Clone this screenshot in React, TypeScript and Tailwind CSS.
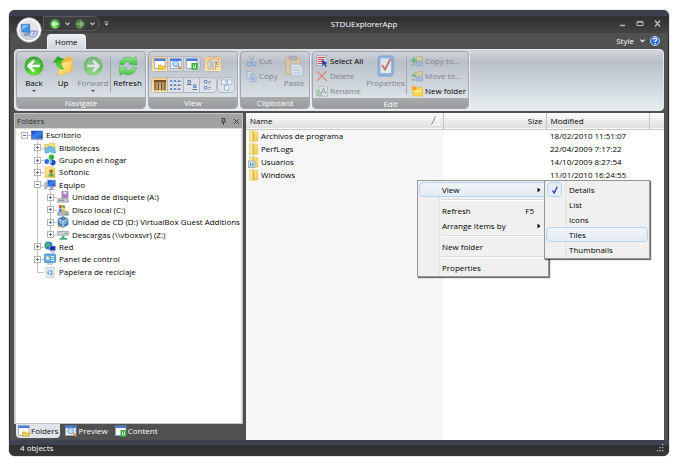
import { useState } from 'react';
import type { ReactNode } from 'react';

interface TreeNode {
  label: string;
  depth: number;
  state: 'open' | 'closed' | 'leaf';
  icon: ReactNode;
  last?: boolean;
}

interface FileRow {
  name: string;
  modified: string;
  shared?: boolean;
}

/* ---------- ribbon icons ---------- */

function Gradients() {
  return (
    <svg className="absolute size-0" aria-hidden="true">
      <defs>
        <radialGradient id="green" cx="0.5" cy="0.85" r="0.9">
          <stop offset="0" stopColor="#6fe63a" />
          <stop offset="0.6" stopColor="#37b424" />
          <stop offset="1" stopColor="#23921e" />
        </radialGradient>
        <linearGradient id="folder" x1="0" y1="0" x2="1" y2="1">
          <stop offset="0" stopColor="#fff3a0" />
          <stop offset="1" stopColor="#f2c443" />
        </linearGradient>
        <linearGradient id="leaf" x1="0" y1="0" x2="0" y2="1">
          <stop offset="0" stopColor="#9be890" />
          <stop offset="1" stopColor="#3cc042" />
        </linearGradient>
        <linearGradient id="screen" x1="0" y1="0" x2="1" y2="1">
          <stop offset="0" stopColor="#1238b8" />
          <stop offset="0.5" stopColor="#3c86ea" />
          <stop offset="1" stopColor="#1b49b4" />
        </linearGradient>
      </defs>
    </svg>
  );
}

function ArrowBall({ size, flip = false, faded = false }: { size: number; flip?: boolean; faded?: boolean }) {
  return (
    <svg width={size} height={size} viewBox="0 0 20 20" opacity={faded ? 0.55 : 1}>
      <circle cx="10" cy="10" r="9.5" fill="url(#green)" stroke="#8fca88" strokeWidth="0.6" />
      <path d="M2.2 8.5a8 8 0 0 1 15.6 0c-4 2-11 2-15.6 0z" fill="#fff" opacity="0.2" />
      <path
        d="M10 4.6 4.6 10l5.4 5.4M5 10h10.8"
        fill="none"
        stroke="#fff"
        strokeWidth="2.6"
        transform={flip ? 'matrix(-1 0 0 1 20 0)' : undefined}
      />
    </svg>
  );
}

function UpIcon() {
  return (
    <svg width="20" height="20" viewBox="0 0 20 20">
      <path d="M5 4l7-2 1.500-1.500 6 .8v13L7 17z" fill="#e8bf4a" />
      <path d="M6.500 7.500 19.600 4 17.500 16 5 19.500z" fill="url(#folder)" stroke="#e6b23a" strokeWidth="0.6" />
      <path d="M.6 6.500 4.500.6l6.500 3-2.600 1c-.8 3.600-.2 6.200 2.200 8.600C6 13 3.300 10.600 3.400 6.200z" fill="url(#green)" stroke="#2aa526" strokeWidth="0.5" />
    </svg>
  );
}

function RefreshIcon() {
  return (
    <svg width="20" height="20" viewBox="0 0 20 20">
      <path d="M1.500 8.500C2.500 2 9.500-.8 14.700 2.600L18 .6l1 8.400-8.200-1 2-2.200C9.600 4.600 6.800 5.600 5.300 9z" fill="url(#leaf)" stroke="#3cae40" strokeWidth="0.5" />
      <path d="M18.500 11.500C17.500 18 10.500 20.800 5.300 17.400L2 19.400 1 11l8.200 1-2 2.200c3.200 1.200 6 .2 7.500-3.200z" fill="url(#leaf)" stroke="#3cae40" strokeWidth="0.5" />
    </svg>
  );
}

function LogoIcon() {
  return (
    <svg width="26" height="26" viewBox="0 0 26 26">
      <circle cx="13" cy="13" r="12.3" fill="#e4e4e6" stroke="#9b9b9f" />
      <path d="M2 13a11 11 0 0 0 22 0z" fill="#cfd0d4" />
      <circle cx="13" cy="13" r="11" fill="none" stroke="#fff" strokeWidth="1.4" />
      <path d="M5 7.500 13.500 7l.8 8.500L6 15z" fill="#3d92dd" stroke="#2c6fb0" strokeWidth="0.5" />
      <path d="M6.200 8.500l6.300-.4-5.800 5z" fill="#8ccaf5" />
      <path d="M7 17l6-1.500 2 1.500-6 2.200z" fill="#7f97ad" />
      <path d="M12.500 18.500 16 14l5.500 1-3 5z" fill="#e9edff" stroke="#6373c8" strokeWidth="0.7" />
      <path d="M15.500 17.500 19.500 14l-1.500 4z" fill="#8794e0" />
    </svg>
  );
}

function PaneIcon({ kind }: { kind: 'folder' | 'search' | 'content' }) {
  return (
    <svg width="12" height="12" viewBox="0 0 12 12">
      <rect x="0.5" y="1" width="10.5" height="9.5" fill="#fff" stroke="#8d9cbb" strokeWidth="0.7" />
      <rect x="0.3" y="0.6" width="11" height="2.4" fill="#4a7bdc" />
      {kind === 'folder' && <path d="M4.500 11.300V7h2.500l1 1h3.800l-1.500 3.300z" fill="#f6cf52" stroke="#c99b2c" strokeWidth="0.6" />}
      {kind === 'search' && (
        <>
          <path d="M7.800 7.800l3.400 3.400" stroke="#e5893c" strokeWidth="1.9" />
          <circle cx="5.600" cy="5.800" r="3" fill="#b5e0fa" stroke="#6f9bd0" />
        </>
      )}
      {kind === 'content' && (
        <>
          <rect x="5.500" y="5" width="6" height="6.800" fill="#3aa840" />
          <path d="M7.500 6.500V10h2V6.500" stroke="#d9ffd5" strokeWidth="0.9" fill="none" />
        </>
      )}
    </svg>
  );
}

function NotesIcon() {
  return (
    <svg width="12" height="12" viewBox="0 0 12 12">
      <path d="M3.500 1H11v7.500H3.500z" fill="#fff6e0" stroke="#a39479" strokeWidth="0.7" />
      <path d="M1 3h7.500v8H1z" fill="#f4efe4" stroke="#a39479" strokeWidth="0.7" />
      <path d="M2.300 5h5M2.300 7h5M2.300 9h5M9.500 3v4" stroke="#8d867c" strokeWidth="0.9" />
    </svg>
  );
}

function DetailsIcon() {
  return (
    <svg width="12" height="12" viewBox="0 0 12 12">
      <path d="M0 1h12v2H0z" fill="#7a4d1f" />
      <path d="M1 2.500v9M4.300 2.500v9M7.700 2.500v9M11 2.500v9" stroke="#6a4e2d" strokeWidth="1.4" />
      <path d="M2.600 3v8M6 3v8M9.400 3v8" stroke="#b98c5a" strokeWidth="1.2" />
    </svg>
  );
}

function ListIcon() {
  return (
    <svg width="12" height="12" viewBox="0 0 12 12">
      {[1, 5, 9].map((y) => (
        <g key={y}>
          <path d={`M0 ${y}h2v2h-2zM4 ${y}h2v2h-2zM8 ${y}h2v2h-2z`} fill="#6b8ecd" />
          <path d={`M2.400 ${y + 1.5}h1.200M6.400 ${y + 1.5}h1.200M10.400 ${y + 1.5}h1.200`} stroke="#7a8296" strokeWidth="0.8" />
        </g>
      ))}
    </svg>
  );
}

function IconsIcon() {
  return (
    <svg width="12" height="12" viewBox="0 0 12 12">
      <path d="M2 1.500h2.500V4H2zM7.500 6h2.500v2.500H7.500z" fill="#cfe0fb" stroke="#4974c2" strokeWidth="0.9" />
      <path d="M1 5.500h4.500M6.500 10.500h4.500" stroke="#666d80" />
    </svg>
  );
}

function TilesIcon() {
  return (
    <svg width="12" height="12" viewBox="0 0 12 12">
      <path d="M2.500 1.500H5V4H2.500zM2.500 7.500H5V10H2.500z" fill="#dbe7fb" stroke="#6284c4" strokeWidth="0.9" />
      <path d="M6.500 2.500H9M6.500 4.200H8.500M6.500 8.500H9M6.500 10.200H8.500" stroke="#7d8292" strokeWidth="0.8" />
    </svg>
  );
}

function ThumbsIcon() {
  return (
    <svg width="13" height="12" viewBox="0 0 13 12" fill="#f3f8ff" stroke="#8aa9e0" strokeWidth="0.8">
      <path d="M1.500.8h3L6 2.300v3H1.500zM7.500.8h3L12 2.300v3H7.500zM4.500 6.500h3L9 8v3.200H4.500z" />
    </svg>
  );
}

function CutIcon() {
  return (
    <svg width="11" height="12" viewBox="0 0 11 12" fill="none" opacity="0.55">
      <path d="M3 1l4 7M8 1L4 8" stroke="#8a9db5" strokeWidth="1.2" />
      <circle cx="2.800" cy="9" r="1.900" stroke="#5a94d0" strokeWidth="1.3" />
      <circle cx="8.200" cy="9" r="1.900" stroke="#5a94d0" strokeWidth="1.3" />
    </svg>
  );
}

function CopyIcon() {
  return (
    <svg width="11" height="12" viewBox="0 0 11 12" strokeWidth="0.7" stroke="#7f97c4" opacity="0.7">
      <path d="M.8 1.500h4l1.500 1.500v5.500H.8z" fill="#cfdcf2" />
      <path d="M4.200 4.500h4l2 2v5h-6z" fill="#b5c9ec" />
      <path d="M5.500 7.500h3M5.500 9.300h3" stroke="#6480b8" />
    </svg>
  );
}

function PasteIcon() {
  return (
    <svg width="20" height="22" viewBox="0 0 20 22" opacity="0.6">
      <rect x="1.500" y="2.500" width="15" height="17" rx="1" fill="#e8c78a" stroke="#c9a670" />
      <path d="M5.500 1.200h7v3.600h-7z" fill="#a4a8ae" stroke="#80858c" strokeWidth="0.8" />
      <path d="M7 9h8l4 4v8H7z" fill="#eef3fb" stroke="#93a5c5" strokeWidth="0.8" />
      <path d="M9 13h7M9 15.500h8M9 18h8" stroke="#b4c2dc" />
    </svg>
  );
}

function SelectAllIcon() {
  return (
    <svg width="12" height="12" viewBox="0 0 12 12">
      <rect x="0.500" y="0.500" width="9.500" height="10" fill="#dfe5f3" stroke="#8d9abb" strokeWidth="0.6" />
      <path d="M1.500 2.500H9M1.500 4.500H8M1.500 6.500H6.500M1.500 8.500H6.500" stroke="#d9483a" strokeWidth="1.1" />
      <path d="M6 4.500l5.500 3.700-2.300.5 1.600 2.500-1.200.7-1.500-2.600L6.300 11z" fill="#1f3f9c" />
    </svg>
  );
}

function DeleteIcon() {
  return (
    <svg width="12" height="12" viewBox="0 0 12 12">
      <path d="M1 1.500l10 9.500M10.500 1L1 11" stroke="#d98b81" strokeWidth="1.3" />
    </svg>
  );
}

function RenameIcon() {
  return (
    <svg width="12" height="12" viewBox="0 0 12 12" opacity="0.6">
      <path d="M3 1.500h8.500v9.500H3z" fill="#e4ebe6" stroke="#8f9d96" strokeWidth="0.7" />
      <path d="M5 9l2.500-6L10 9M5.800 7h3.400" fill="none" stroke="#6c7b80" />
      <path d="M.7 11V5.500h2.600L6 11z" fill="#8ac492" stroke="#639c6d" strokeWidth="0.6" />
    </svg>
  );
}

function PropertiesIcon() {
  return (
    <svg width="18" height="22" viewBox="0 0 18 22" opacity="0.8">
      <path d="M2.500 1h12l2 1.500-.6 17.500-1.500 1H2.200L1 19.500 1.500 2z" fill="#86b1de" stroke="#6b98cb" />
      <rect x="3.500" y="3.500" width="10.500" height="14.500" fill="#e9edf4" />
      <path d="M5 10l3 4.500L13.500 4" fill="none" stroke="#cc5a4f" strokeWidth="1.9" />
    </svg>
  );
}

function TransferIcon({ move = false }: { move?: boolean }) {
  return (
    <svg width="12" height="12" viewBox="0 0 12 12" opacity="0.7">
      <path d="M3.500 2.500h3l1-1h4V6h-8z" fill="#d9cf8c" stroke="#a79c5a" strokeWidth="0.6" />
      <path d="M5 7h6.500v4H5z" fill="#9bb2de" stroke="#7c93c4" strokeWidth="0.6" />
      <path d={move ? 'M.5 4.500h4.500v2H.5z' : 'M2 2.500h2v2h2v2H4v2H2v-2H0v-2h2z'} fill="#57a968" />
      <path d="M.5 9h3.500v1.500H.5z" fill="#72b47f" />
    </svg>
  );
}

function NewFolderIcon() {
  return (
    <svg width="12" height="12" viewBox="0 0 12 12">
      <path d="M2 4h3.500l1-1.300H11.500V11H2z" fill="#fbd94e" stroke="#ecb93a" strokeWidth="0.7" />
      <path d="M3 5.500h7.800V7H3z" fill="#fff0a0" />
      <path d="M3 0l.8 2L6 1.500 4.700 3.200 6 5l-2.200-.6L3 6.500l-.8-2.100L0 5l1.300-1.800L0 1.500l2.200.5z" fill="#ff9c1c" />
    </svg>
  );
}

/* ---------- tree icons ---------- */

const treeSvg = { width: 12, height: 12, viewBox: '0 0 12 12' };

const desktopIcon = (
  <svg {...treeSvg}>
    <rect x="0.500" y="2" width="11" height="7.500" fill="url(#screen)" stroke="#3a5596" strokeWidth="0.6" />
    <path d="M0 10.600h12" stroke="#8fa0c4" />
  </svg>
);

const libraryIcon = (
  <svg {...treeSvg}>
    <path d="M.5 2.500h4l1-1h5.500V9H.5z" fill="#f3dc7e" stroke="#d1b050" strokeWidth="0.6" />
    <path d="M1.500 6q4.500-3 9 0l1 5H8.500q-2.500-2.500-5 0H1z" fill="#6cc0ea" stroke="#4c9bcb" strokeWidth="0.6" />
  </svg>
);

const homeGroupIcon = (
  <svg {...treeSvg}>
    <circle cx="7.500" cy="3.300" r="2.700" fill="#35b13f" />
    <circle cx="3" cy="7.500" r="2.500" fill="#2b62d8" />
    <circle cx="8.800" cy="8.600" r="2.800" fill="#1c4fc0" />
    <path d="M5 5l3 3M3.500 8l4 1" stroke="#9ed9ff" strokeWidth="1.2" />
  </svg>
);

const userIcon = (
  <svg {...treeSvg}>
    <path d="M1 .8h6L11 2v9.500H1z" fill="url(#folder)" stroke="#dcb95a" strokeWidth="0.6" />
    <circle cx="7.200" cy="5.200" r="1.800" fill="#9a643a" />
    <path d="M4.500 10.500q.4-3.500 2.700-3.500t2.800 3.500z" fill="#5fa67a" />
  </svg>
);

const computerIcon = (
  <svg {...treeSvg}>
    <path d="M.8 3.500H3V10H.8z" fill="#b4bac6" stroke="#8d94a0" strokeWidth="0.5" />
    <rect x="3.300" y="1" width="8.300" height="6.800" fill="url(#screen)" stroke="#a6b0c6" strokeWidth="0.7" />
    <path d="M6 8h3v1.700H6zM4.500 10h6v1h-6z" fill="#8f99aa" />
  </svg>
);

const floppyIcon = (
  <svg {...treeSvg}>
    <rect x="5" y="0.500" width="6" height="6" fill="#b37fd0" stroke="#8b5ba6" strokeWidth="0.6" />
    <path d="M6.300.8h3.400v2H6.300z" fill="#f2e8f7" />
    <path d="M1 7.500h10l.6 3.700H.4z" fill="#c3c6cc" stroke="#8f949d" strokeWidth="0.6" />
    <path d="M2 9.300h5" stroke="#7f848c" />
  </svg>
);

const diskIcon = (
  <svg {...treeSvg}>
    <path d="M1 7.500h10l.6 3.700H.4z" fill="#b3b7bd" stroke="#7c828b" strokeWidth="0.6" />
    <path d="M2 1.200l2.700-.5v3L2 4.200z" fill="#e2542f" />
    <path d="M5.200.8l2.800.7v3l-2.800-.7z" fill="#6fb63c" />
    <path d="M2 4.700l2.700-.5v3L2 7.500z" fill="#3d7fdc" />
    <path d="M5.200 4.300L8 5v2.700l-2.800-.5z" fill="#f0bd2e" />
    <path d="M8 10h2.500" stroke="#54a53f" />
  </svg>
);

const cdIcon = (
  <svg {...treeSvg}>
    <path d="M6 .6l5 2.400v5.700L6 11.400 1 8.700V3z" fill="#4585b8" stroke="#33688f" strokeWidth="0.6" />
    <path d="M1.500 3.200L6 5.500l4.500-2.300M6 5.500V11" fill="none" stroke="#e4f2fc" />
    <path d="M2.500 5l2 3M9.500 5l-2 3" stroke="#e4f2fc" strokeWidth="0.8" />
    <path d="M1 9l3 2.500H1z" fill="#e9a32b" />
  </svg>
);

const netDriveIcon = (
  <svg {...treeSvg}>
    <path d="M.6 2.500h10.800v3.600H.6z" fill="#cdd0d4" stroke="#8a9099" strokeWidth="0.7" />
    <path d="M8 4.400h2" stroke="#41b550" />
    <path d="M5 6.500h2.500V9H10v1.800H2.500V9H5z" fill="#45b070" />
  </svg>
);

const networkIcon = (
  <svg {...treeSvg}>
    <circle cx="4.500" cy="4.500" r="4" fill="#2577d2" />
    <path d="M2 2.500q2-2 3.500-.5T4 5.500 1.500 6zM5.500 6l2-1.500v3z" fill="#45bb52" />
    <rect x="5.500" y="5" width="6" height="4.700" fill="#1430a8" stroke="#a9b7d8" strokeWidth="0.7" />
    <path d="M7 11h3.500" stroke="#8590a2" />
  </svg>
);

const controlPanelIcon = (
  <svg {...treeSvg}>
    <rect x="0.500" y="1" width="11" height="8.500" rx="0.8" fill="#5aabe6" stroke="#4285ba" strokeWidth="0.7" />
    <circle cx="3.800" cy="5" r="2" fill="#d9f0ff" />
    <path d="M3.800 5V3a2 2 0 0 1 2 2z" fill="#f2a638" />
    <path d="M7 3.500h3M7 5.500h3M7 7.500h3" stroke="#e8f6ff" strokeWidth="0.9" />
    <path d="M3 11h6" stroke="#98a3ae" />
  </svg>
);

const binIcon = (
  <svg {...treeSvg}>
    <path d="M1.500 1.500h9l-1 10h-7z" fill="#e4edf4" stroke="#b4c4d0" strokeWidth="0.7" />
    <circle cx="6" cy="6.600" r="2" fill="none" stroke="#5590d6" strokeWidth="1.2" strokeDasharray="3 1" />
  </svg>
);

const tree: TreeNode[] = [
  { label: 'Escritorio', depth: 0, state: 'open', icon: desktopIcon },
  { label: 'Bibliotecas', depth: 1, state: 'closed', icon: libraryIcon },
  { label: 'Grupo en el hogar', depth: 1, state: 'closed', icon: homeGroupIcon },
  { label: 'Softonic', depth: 1, state: 'closed', icon: userIcon },
  { label: 'Equipo', depth: 1, state: 'open', icon: computerIcon },
  { label: 'Unidad de disquete (A:)', depth: 2, state: 'closed', icon: floppyIcon },
  { label: 'Disco local (C:)', depth: 2, state: 'closed', icon: diskIcon },
  { label: 'Unidad de CD (D:) VirtualBox Guest Additions', depth: 2, state: 'closed', icon: cdIcon },
  { label: 'Descargas (\\\\vboxsvr) (Z:)', depth: 2, state: 'closed', icon: netDriveIcon, last: true },
  { label: 'Red', depth: 1, state: 'closed', icon: networkIcon },
  { label: 'Panel de control', depth: 1, state: 'closed', icon: controlPanelIcon },
  { label: 'Papelera de reciclaje', depth: 1, state: 'leaf', icon: binIcon, last: true },
];

const files: FileRow[] = [
  { name: 'Archivos de programa', modified: '18/02/2010 11:51:07' },
  { name: 'PerfLogs', modified: '22/04/2009 7:17:22' },
  { name: 'Usuarios', modified: '14/10/2009 8:27:54', shared: true },
  { name: 'Windows', modified: '11/01/2010 16:24:55' },
];

const viewModes = ['Details', 'List', 'Icons', 'Tiles', 'Thumbnails'];

/* ---------- small pieces ---------- */

function Caret({ className = '' }: { className?: string }) {
  return (
    <svg width="4" height="2" viewBox="0 0 4 2" className={className}>
      <path d="M0 0h4L2 2z" fill="currentColor" />
    </svg>
  );
}

function Chevron() {
  return (
    <svg width="5" height="4" viewBox="0 0 5 4" fill="none">
      <path d="M.5.7l2 2 2-2" stroke="currentColor" strokeWidth="1.1" />
    </svg>
  );
}

function Group({ title, children }: { title: string; children: ReactNode }) {
  return (
    <section className="flex flex-col overflow-hidden rounded-sm border border-[#a3a6ab] shadow-[1px_1px_0_#eef2f4]">
      <div className="flex flex-1 items-stretch px-px">{children}</div>
      <h2 className="h-[11px] bg-linear-to-b from-[#a9abac] to-[#989a9b] text-center leading-[11px] text-white">{title}</h2>
    </section>
  );
}

function BigButton({ label, icon, width, caret = false, disabled = false }: { label: string; icon: ReactNode; width: string; caret?: boolean; disabled?: boolean }) {
  return (
    <button disabled={disabled} className={`flex flex-col items-center pt-[3px] disabled:text-[#7f838a] ${width}`}>
      <span className="flex h-[22px] items-center justify-center">{icon}</span>
      <span className="leading-3">{label}</span>
      {caret && <Caret className="mt-px text-[#444]" />}
    </button>
  );
}

function SmallButton({ label, icon, disabled = true }: { label: string; icon: ReactNode; disabled?: boolean }) {
  return (
    <button disabled={disabled} className="flex h-[15px] items-center gap-[2px] whitespace-nowrap disabled:text-[#7f838a]">
      {icon}
      {label}
    </button>
  );
}

function ToolButton({ label, active = false, children }: { label: string; active?: boolean; children: ReactNode }) {
  return (
    <button
      aria-label={label}
      aria-pressed={active}
      className="flex h-[14px] w-4 items-center justify-center border-r border-[#b4b9c1] last:border-r-0 aria-pressed:bg-linear-to-b aria-pressed:from-[#f9c98a] aria-pressed:to-[#fde9a4]"
    >
      {children}
    </button>
  );
}

function ToolStrip({ children }: { children: ReactNode }) {
  return <div className="flex rounded-sm border border-[#b4b9c1] bg-white/25">{children}</div>;
}

function Divider() {
  return <span className="my-1 w-px bg-[#a4a8af]" />;
}

function TreeRow({ node }: { node: TreeNode }) {
  return (
    <li className="flex items-center whitespace-nowrap">
      {Array.from({ length: node.depth }, (_, i) => (
        <span key={i} className="flex w-[13px] justify-center self-stretch">
          {i > 0 && <span className="w-px bg-[#c2c2c2]" />}
        </span>
      ))}
      <span className="relative flex w-[13px] items-center justify-center self-stretch">
        {node.depth > 0 && (
          <span className={`absolute top-0 left-[6px] w-px bg-[#c2c2c2] ${node.last ? 'h-1/2' : 'h-full'}`} />
        )}
        <span className="absolute top-1/2 right-0 left-[6px] h-px bg-[#c2c2c2]" />
        {node.state !== 'leaf' && (
          <button aria-label={`${node.state === 'open' ? 'Collapse' : 'Expand'} ${node.label}`} className="relative">
            <svg width="7" height="7" viewBox="0 0 7 7" className="block">
              <rect x="0.500" y="0.500" width="6" height="6" fill="#fff" stroke="#b4b4b4" />
              <path d={node.state === 'open' ? 'M2 3.500h3' : 'M2 3.500h3M3.500 2v3'} stroke="#5a6fae" />
            </svg>
          </button>
        )}
      </span>
      {node.icon}
      <span className="pl-[3px]">{node.label}</span>
    </li>
  );
}

function FolderIcon({ shared = false }: { shared?: boolean }) {
  return (
    <svg width="12" height="12" viewBox="0 0 12 12" className="block">
      <path d="M1.500 1l3.500-.5V11l-3.500.5z" fill="#f9e796" stroke="#e0c468" strokeWidth="0.5" />
      <path d="M5 .6l4.800 1.200V11L5 11.500z" fill="url(#folder)" stroke="#dcb650" strokeWidth="0.5" />
      <path d="M5.800 1.500V11" stroke="#c9a03a" strokeWidth="0.8" />
      {shared && (
        <>
          <rect x="0.500" y="5" width="6.500" height="6.500" fill="#e1eef4" stroke="#84a0b2" strokeWidth="0.7" />
          <path d="M2.500 6.500v4M4.900 6.500v4" stroke="#55859c" strokeWidth="1.2" />
        </>
      )}
    </svg>
  );
}

function MenuItem({ label, hint, arrow = false, lit = false, checked = false, onClick }: { label: string; hint?: string; arrow?: boolean; lit?: boolean; checked?: boolean; onClick?: () => void }) {
  return (
    <button
      role="menuitem"
      onClick={onClick}
      className={`flex h-[15px] w-full items-center rounded-sm border pr-1 text-left ${lit ? 'border-[#b5d3f2] bg-linear-to-b from-[#f0f4f9] to-[#e3ebf5]' : 'border-transparent hover:border-[#b5d3f2]'}`}
    >
      <span className="flex w-[22px] items-center">
        {checked && (
          <span className="flex h-[15px] w-[15px] items-center justify-center rounded-sm border border-[#b5d3f2] bg-[#e6eff9]">
            <svg width="8" height="8" viewBox="0 0 8 8" fill="none">
              <path d="M1.500 4.500l1.700 2.500L6.300.8" stroke="#2a2ab8" strokeWidth="1.3" />
            </svg>
          </span>
        )}
      </span>
      <span className="flex-1">{label}</span>
      {hint && <span className="pr-2">{hint}</span>}
      {arrow && (
        <svg width="4" height="6" viewBox="0 0 4 6" className="mr-px">
          <path d="M.5.5L3.500 3l-3 2.500z" fill="#111" />
        </svg>
      )}
    </button>
  );
}

function MenuLine() {
  return <div role="separator" className="my-[2px] ml-[22px] h-[2px] border-t border-[#dcdcdc] bg-white" />;
}

function MenuPanel({ className, children }: { className: string; children: ReactNode }) {
  return (
    <div
      role="menu"
      className={`absolute border border-[#979797] bg-linear-to-r from-[#f0f0f0] from-[20px] via-[#dfdfdf] via-[21px] to-[#f0f0f0] to-[22px] p-px shadow-[1px_1px_1px_#00000090] ${className}`}
    >
      {children}
    </div>
  );
}

/* ---------- window sections ---------- */

function TitleBar() {
  return (
    <header className="flex h-[23px] shrink-0 items-center bg-linear-to-b from-[#3f4250] from-25% via-[#2f2f2f] via-30% to-[#434343] pt-1 pr-2">
      <div className="relative z-10 w-[34px] self-start">
        <button aria-label="Application menu" className="absolute top-[3px] left-[7px]">
          <LogoIcon />
        </button>
      </div>
      <div className="flex h-[15px] w-[57px] items-center gap-[5px] rounded-r-full border border-[#5a5a5a] bg-[#3d3d3d] pl-[6px] text-[#cfcfcf]">
        <button aria-label="Back"><ArrowBall size={10} /></button>
        <Chevron />
        <button aria-label="Forward"><ArrowBall size={10} flip faded /></button>
        <Chevron />
      </div>
      <button aria-label="Customize toolbar" className="ml-1 text-[#cfcfcf]">
        <svg width="5" height="6" viewBox="0 0 5 6">
          <path d="M.5.5h4v.8h-4zM.5 2.500h4l-2 2.300z" fill="currentColor" />
        </svg>
      </button>
      <h1 className="flex-1 text-center text-white">STDUExplorerApp</h1>
      <div className="flex items-center gap-[10px] text-[#b9b9bf]">
        <button aria-label="Minimize">
          <svg width="7" height="7" viewBox="0 0 7 7"><path d="M1 5.500h5" stroke="currentColor" strokeWidth="1.4" /></svg>
        </button>
        <button aria-label="Maximize">
          <svg width="8" height="7" viewBox="0 0 8 7" fill="none"><path d="M1 1.500h6V5.500H1zM1 2.200h6" stroke="currentColor" /></svg>
        </button>
        <button aria-label="Close">
          <svg width="7" height="7" viewBox="0 0 7 7"><path d="M1 .5l5 6M6 .5l-5 6" stroke="currentColor" strokeWidth="1.4" /></svg>
        </button>
      </div>
    </header>
  );
}

function Ribbon() {
  return (
    <div className="flex h-[62px] shrink-0 gap-[2px] rounded-sm border border-[#e6e9ec] bg-linear-to-b from-[#d3d7de] via-[#b9bfca] via-20% to-[#e6efef] p-px">
      <Group title="Navigate">
        <BigButton label="Back" icon={<ArrowBall size={20} />} width="w-[32px]" caret />
        <BigButton label="Up" icon={<UpIcon />} width="w-[26px]" />
        <BigButton label="Forward" icon={<ArrowBall size={20} flip faded />} width="w-[34px]" caret disabled />
        <Divider />
        <BigButton label="Refresh" icon={<RefreshIcon />} width="w-[33px]" />
      </Group>
      <Group title="View">
        <div className="flex flex-col justify-center gap-[5px] px-px">
          <div className="flex gap-[3px]">
            <ToolStrip>
              <ToolButton label="Folders pane" active><PaneIcon kind="folder" /></ToolButton>
              <ToolButton label="Preview pane"><PaneIcon kind="search" /></ToolButton>
              <ToolButton label="Content pane"><PaneIcon kind="content" /></ToolButton>
            </ToolStrip>
            <ToolStrip>
              <ToolButton label="Notes" active><NotesIcon /></ToolButton>
            </ToolStrip>
          </div>
          <div className="flex">
            <ToolStrip>
              <ToolButton label="Details" active><DetailsIcon /></ToolButton>
              <ToolButton label="List"><ListIcon /></ToolButton>
              <ToolButton label="Icons"><IconsIcon /></ToolButton>
              <ToolButton label="Tiles"><TilesIcon /></ToolButton>
            </ToolStrip>
            <ToolStrip>
              <ToolButton label="Thumbnails"><ThumbsIcon /></ToolButton>
            </ToolStrip>
          </div>
        </div>
      </Group>
      <Group title="Clipboard">
        <div className="flex w-[38px] flex-col pt-px pl-1">
          <SmallButton label="Cut" icon={<CutIcon />} />
          <SmallButton label="Copy" icon={<CopyIcon />} />
        </div>
        <BigButton label="Paste" icon={<PasteIcon />} width="w-[28px]" disabled />
      </Group>
      <Group title="Edit">
        <div className="flex w-[51px] flex-col pt-px pl-[2px]">
          <SmallButton label="Select All" icon={<SelectAllIcon />} disabled={false} />
          <SmallButton label="Delete" icon={<DeleteIcon />} />
          <SmallButton label="Rename" icon={<RenameIcon />} />
        </div>
        <BigButton label="Properties" icon={<PropertiesIcon />} width="w-[41px]" disabled />
        <Divider />
        <div className="flex w-[60px] flex-col pt-px pl-1">
          <SmallButton label="Copy to..." icon={<TransferIcon />} />
          <SmallButton label="Move to..." icon={<TransferIcon move />} />
          <SmallButton label="New folder" icon={<NewFolderIcon />} disabled={false} />
        </div>
      </Group>
    </div>
  );
}

const paneTabs = [
  { label: 'Folders', kind: 'folder' },
  { label: 'Preview', kind: 'search' },
  { label: 'Content', kind: 'content' },
] as const;

function FoldersPane() {
  const [tab, setTab] = useState('Folders');

  return (
    <aside className="flex w-[229px] shrink-0 flex-col">
      <div className="flex flex-1 flex-col border border-[#c4c4c4] bg-[#dcdcdc]">
        <div className="flex h-[14px] items-center bg-[#a0a2a2] px-[2px] text-[#333]">
          <h2 className="flex-1">Folders</h2>
          <button aria-label="Pin pane" className="mr-[7px]">
            <svg width="5" height="7" viewBox="0 0 5 7" fill="none" stroke="currentColor" strokeWidth="0.9">
              <path d="M1.300 0v3.500M3.700 0v3.500M1.300.5h2.400M0 4h5M2.500 4v3" />
            </svg>
          </button>
          <button aria-label="Close pane">
            <svg width="7" height="7" viewBox="0 0 7 7"><path d="M1 1l5 5M6 1L1 6" stroke="currentColor" strokeWidth="0.9" /></svg>
          </button>
        </div>
        <div className="mx-px mt-px flex-1 bg-white pl-[2px]">
          <ul className="grid h-[149px] auto-rows-fr">
            {tree.map((node) => (
              <TreeRow key={node.label} node={node} />
            ))}
          </ul>
        </div>
      </div>
      <div className="flex h-4 gap-[3px] pl-[2px]" role="tablist">
        {paneTabs.map(({ label, kind }) => (
          <button
            key={label}
            role="tab"
            aria-selected={tab === label}
            onClick={() => setTab(label)}
            className="flex h-[14px] items-center gap-px rounded-b-sm px-[2px] text-white aria-selected:bg-[#dfe5ea] aria-selected:text-[#111]"
          >
            <PaneIcon kind={kind} />
            {label}
          </button>
        ))}
      </div>
    </aside>
  );
}

function FilesPane() {
  const [mode, setMode] = useState('Details');

  return (
    <main className="relative grid min-w-0 flex-1 bg-white">
      <table className="h-full w-full table-fixed border-collapse text-left">
        <colgroup>
          <col className="bg-[#f7f7f7]" />
          <col className="w-[103px]" />
          <col className="w-[103px]" />
          <col className="w-[15px]" />
        </colgroup>
        <thead>
          <tr className="h-[16px] border-b border-[#c9c9c9] bg-linear-to-b from-[#fbfbfb] to-[#e0e0e0] [&>th]:border-r [&>th]:border-[#c4c4c4] [&>th]:p-0 [&>th]:font-normal">
            <th>
              <span className="flex items-center pr-[3px] pl-1">
                <span className="flex-1">Name</span>
                <svg width="9" height="9" viewBox="0 0 9 9" fill="none">
                  <path d="M.5 8.500h8L4.500.5" stroke="#fff" />
                  <path d="M.5 8.500l4-8" stroke="#8c8c8c" />
                </svg>
              </span>
            </th>
            <th><span className="block pr-[3px] text-right">Size</span></th>
            <th><span className="block pl-1">Modified</span></th>
            <td />
          </tr>
        </thead>
        <tbody>
          {files.map((file) => (
            <tr key={file.name} className="h-[13px] [&>td]:p-0">
              <td>
                <span className="flex h-[13px] items-center gap-px pl-[2px]">
                  <FolderIcon shared={file.shared} />
                  {file.name}
                </span>
              </td>
              <td />
              <td><span className="block pl-1 whitespace-nowrap">{file.modified}</span></td>
              <td />
            </tr>
          ))}
          <tr><td /><td /><td /><td /></tr>
        </tbody>
      </table>

      <MenuPanel className="top-[67px] left-[171px] w-[132px]">
        <MenuItem label="View" arrow lit />
        <MenuLine />
        <MenuItem label="Refresh" hint="F5" />
        <MenuItem label="Arrange Items by" arrow />
        <MenuLine />
        <MenuItem label="New folder" />
        <MenuLine />
        <MenuItem label="Properties" />
      </MenuPanel>
      <MenuPanel className="top-[67px] left-[298px] w-[106px]">
        {viewModes.map((name) => (
          <MenuItem key={name} label={name} checked={mode === name} lit={name === 'Tiles'} onClick={() => setMode(name)} />
        ))}
      </MenuPanel>
    </main>
  );
}

export default function App() {
  return (
    <div className="flex h-screen flex-col bg-white pt-[10px] pr-[11px] pb-[9px] pl-[9px] font-['Open_Sans','Noto_Sans',sans-serif] text-[8px] leading-3 text-black">
      <Gradients />
      <div className="flex min-h-0 flex-1 flex-col overflow-hidden rounded-md bg-[#505050] shadow-[0_0_1px_#000]">
        <TitleBar />
        <div className="flex min-h-0 flex-1 flex-col border-x border-[#2c2c2c] px-1">
          <nav className="flex h-4 shrink-0 items-end pr-1 pl-[33px]">
            <button className="h-[15px] rounded-t-sm border border-b-0 border-[#eef4f6] bg-linear-to-b from-[#e9eff2] to-[#d2d7de] px-[7px]">Home</button>
            <div className="ml-auto flex items-center gap-[5px] self-center text-white">
              <button className="flex items-center gap-[6px]">
                Style
                <Chevron />
              </button>
              <button aria-label="Help">
                <svg width="10" height="10" viewBox="0 0 10 10" className="block">
                  <circle cx="5" cy="5" r="4.500" fill="#2f6fdd" stroke="#c7dcfa" strokeWidth="0.9" />
                  <path d="M3.400 3.800q.2-1.600 1.700-1.600t1.600 1.300q0 .9-1.600 1.700v.9M5.100 7v1.200" fill="none" stroke="#fff" strokeWidth="1.2" />
                </svg>
              </button>
            </div>
          </nav>
          <Ribbon />
          <div className="mt-[2px] flex min-h-0 flex-1 gap-[3px]">
            <FoldersPane />
            <FilesPane />
          </div>
        </div>
        <footer className="flex h-4 shrink-0 items-center justify-between bg-linear-to-b from-[#3f4250] from-30% via-[#2f2f2f] via-35% to-[#383838] pr-[5px] pl-[11px] text-white">
          <span>4 objects</span>
          <svg width="8" height="8" viewBox="0 0 8 8" fill="#c4c4c4">
            <path d="M6 0h1.300v1.300H6zM3.500 3h1.300v1.300H3.500zM6 3h1.300v1.300H6zM1 6h1.300v1.300H1zM3.500 6h1.300v1.300H3.500zM6 6h1.300v1.300H6z" />
          </svg>
        </footer>
      </div>
    </div>
  );
}
